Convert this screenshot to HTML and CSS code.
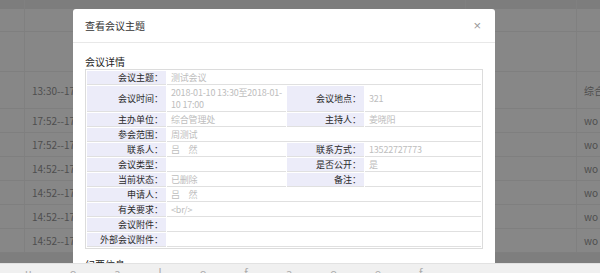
FILE: index.html
```html
<!DOCTYPE html>
<html lang="zh-CN">
<head>
    <meta charset="UTF-8">
    <meta name="viewport" content="width=device-width, initial-scale=1.0">
    <title>查看会议主题</title>
    <link rel="stylesheet" href="styles.css">
</head>
<body>
    <div class="main">
        <div class="bg-list">
            <div class="bg-row head"><span></span><span></span><span></span><span></span></div>
            <div class="bg-row r40"><span></span><span></span><span></span><span></span></div>
            <div class="bg-row r37"><span></span><span>13:30--17:00</span><span></span><span>综合</span></div>
            <div class="bg-row"><span></span><span>17:52--17:55</span><span></span><span>wo</span></div>
            <div class="bg-row"><span></span><span>17:52--17:55</span><span></span><span>wo</span></div>
            <div class="bg-row"><span></span><span>14:52--17:00</span><span></span><span>wo</span></div>
            <div class="bg-row"><span></span><span>14:52--17:00</span><span></span><span>wo</span></div>
            <div class="bg-row"><span></span><span>14:52--17:00</span><span></span><span>wo</span></div>
            <div class="bg-row"><span></span><span>14:52--17:00</span><span></span><span>wo</span></div>
        </div>

        <div class="modal">
            <div class="modal-header">
                <span class="modal-title">查看会议主题</span>
                <span class="modal-close">&times;</span>
            </div>
            <div class="modal-body">
                <div class="section-title">会议详情</div>
                <table class="detail">
                    <colgroup>
                        <col class="c-label"><col class="c-value"><col class="c-label2"><col>
                    </colgroup>
                    <tr><td class="lbl">会议主题：</td><td class="val" colspan="3">测试会议</td></tr>
                    <tr><td class="lbl">会议时间：</td><td class="val">2018-01-10 13:30至2018-01-10 17:00</td><td class="lbl">会议地点：</td><td class="val">321</td></tr>
                    <tr><td class="lbl">主办单位：</td><td class="val">综合管理处</td><td class="lbl">主持人：</td><td class="val">姜晓阳</td></tr>
                    <tr><td class="lbl">参会范围：</td><td class="val" colspan="3">周测试</td></tr>
                    <tr><td class="lbl">联系人：</td><td class="val">吕　然</td><td class="lbl">联系方式：</td><td class="val">13522727773</td></tr>
                    <tr><td class="lbl">会议类型：</td><td class="val"></td><td class="lbl">是否公开：</td><td class="val">是</td></tr>
                    <tr><td class="lbl">当前状态：</td><td class="val">已删除</td><td class="lbl">备注：</td><td class="val"></td></tr>
                    <tr><td class="lbl">申请人：</td><td class="val" colspan="3">吕　然</td></tr>
                    <tr><td class="lbl">有关要求：</td><td class="val" colspan="3">&lt;br/&gt;</td></tr>
                    <tr><td class="lbl">会议附件：</td><td class="val" colspan="3"></td></tr>
                    <tr><td class="lbl">外部会议附件：</td><td class="val" colspan="3"></td></tr>
                </table>
                <div class="section-title next">纪要信息</div>
            </div>
        </div>
    </div>
    <div class="status-bar">
        <span>u</span><span>o</span><span>a</span><span>l</span><span>o</span><span>f</span><span>a</span><span>o</span><span>e</span><span>f</span>
    </div>
</body>
</html>
```

FILE: styles.css
```css
body {
    margin: 0;
    width: 600px;
    height: 273px;
    overflow: hidden;
    font-family: "Noto Sans CJK SC", "Liberation Sans", sans-serif;
    display: flex;
    flex-direction: column;
}
.main {
    position: relative;
    height: 264px;
    overflow: hidden;
    background: #7e7e7e;
}
.bg-list {
    display: flex;
    flex-direction: column;
}
.bg-row {
    display: grid;
    grid-template-columns: 24px 441px 111px 24px;
    height: 24px;
    background: #878787;
    border-bottom: 1px solid #7f7f7f;
    box-sizing: border-box;
}
.bg-row span {
    border-left: 1px solid #808080;
    padding-left: 7px;
    font-size: 10px;
    color: #4e4e4e;
    display: flex;
    align-items: center;
    white-space: nowrap;
    overflow: hidden;
}
.bg-row span:first-child {
    border-left: none;
}
.bg-row.head {
    height: 32px;
    background: linear-gradient(#7d7d7d 0 9px, #878787 9px);
}
.bg-row.r40 { height: 40px; }
.bg-row.r37 { height: 37px; }

.modal {
    position: absolute;
    left: 73px;
    top: 9px;
    width: 422px;
    height: 300px;
    background: #fff;
    border-radius: 3px 3px 0 0;
}
.modal-header {
    height: 33px;
    padding: 0 12px;
    border-bottom: 1px solid #e8e8e8;
    display: flex;
    align-items: center;
    justify-content: space-between;
}
.modal-title {
    font-size: 10px;
    color: #333;
}
.modal-close {
    font-size: 13px;
    color: #999;
    font-family: "Liberation Sans", sans-serif;
    margin-right: 2px;
}
.modal-body {
    padding: 12px 12px 0;
}
.section-title {
    font-size: 10px;
    line-height: 13px;
    color: #222;
    margin-bottom: 1px;
}
.section-title.next {
    margin-top: 9px;
}
.detail {
    width: 398px;
    border: 1px solid #dcdcdc;
    border-collapse: separate;
    border-spacing: 1px;
    font-size: 9px;
    line-height: 12px;
    table-layout: fixed;
}
.c-label { width: 79px; }
.c-value { width: 119px; }
.c-label2 { width: 77px; }
.detail td {
    padding: 1px 0 0 4px;
    border-bottom: 1px solid #e0e0e0;
    vertical-align: middle;
}
.detail .lbl {
    background: #ececf9;
    color: #2a2a2a;
    text-align: right;
    padding-right: 3px;
    white-space: nowrap;
}
.detail .val {
    color: #bdbdbd;
    letter-spacing: -0.2px;
}
.status-bar {
    height: 9px;
    background: #f0f0f0;
    border-top: 1px solid #e2e2e2;
    display: flex;
    gap: 38px;
    padding-left: 25px;
    overflow: hidden;
}
.status-bar span {
    font-size: 11px;
    line-height: 16px;
    color: #aaa;
}
```
